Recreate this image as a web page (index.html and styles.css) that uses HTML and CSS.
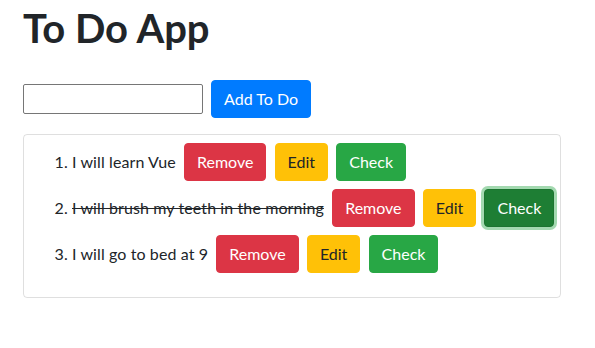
FILE: index.html
```html
<!DOCTYPE html>
<html lang="en">
<head>
  <meta charset="UTF-8">
  <title>To Do App</title>
  <link rel="stylesheet" href="styles.css">
</head>
<body>
  <div class="app">
    <h1>To Do App</h1>

    <form class="add-form" onsubmit="return false">
      <input type="text" class="todo-input">
      <button class="btn btn-primary">Add To Do</button>
    </form>

    <div class="card">
      <ol class="todo-list">
        <li>I will learn Vue
          <button class="btn btn-danger">Remove</button>
          <button class="btn btn-warning">Edit</button>
          <button class="btn btn-success">Check</button>
        </li>
        <li><span class="done">I will brush my teeth in the morning</span>
          <button class="btn btn-danger">Remove</button>
          <button class="btn btn-warning">Edit</button>
          <button class="btn btn-success focused">Check</button>
        </li>
        <li>I will go to bed at 9
          <button class="btn btn-danger">Remove</button>
          <button class="btn btn-warning">Edit</button>
          <button class="btn btn-success">Check</button>
        </li>
      </ol>
    </div>
  </div>
</body>
</html>
```

FILE: styles.css
```css
body {
  margin: 0;
  font-family: 'Segoe UI', Lato, 'Liberation Sans', sans-serif;
  font-size: 16px;
  line-height: 1.5;
  color: #212529;
  background-color: #fff;
}
.app {
  padding: 0 23px;
}
h1 {
  margin: 4px 0 8px;
  font-size: 40px;
  font-weight: 700;
  line-height: 1.2;
}
.add-form {
  margin: 28px 0 16px;
}
.todo-input {
  font-family: inherit;
  font-size: inherit;
  box-sizing: border-box;
  width: 180px;
  height: 30px;
  padding: 1px 2px;
  border: 1px solid #767676;
  border-radius: 2px;
  margin: 0;
}
.btn {
  display: inline-block;
  font-family: inherit;
  font-size: 16px;
  line-height: 1.5;
  letter-spacing: 0;
  padding: 6px 12px;
  border: 1px solid transparent;
  border-radius: 4px;
  color: #fff;
  cursor: pointer;
  margin-left: 4px;
}
.btn-primary { background-color: #007bff; border-color: #007bff; }
.btn-danger { background-color: #dc3545; border-color: #dc3545; }
.btn-warning { background-color: #ffc107; border-color: #ffc107; color: #212529; }
.btn-success { background-color: #28a745; border-color: #28a745; }
.btn-success.focused {
  background-color: #1e7e34;
  border-color: #1c7430;
  box-shadow: 0 0 0 3px rgba(72, 180, 97, .5);
}
.card {
  max-width: 536px;
  border: 1px solid rgba(0, 0, 0, .125);
  border-radius: 4px;
  padding: 4px 0;
}
.todo-list {
  margin: 0 0 16px;
  padding-left: 48px;
}
.todo-list li {
  padding: 4px 0;
  letter-spacing: 0.1px;
}
.todo-list .btn {
  margin-left: 4px;
}
.done {
  text-decoration: line-through;
}
```
